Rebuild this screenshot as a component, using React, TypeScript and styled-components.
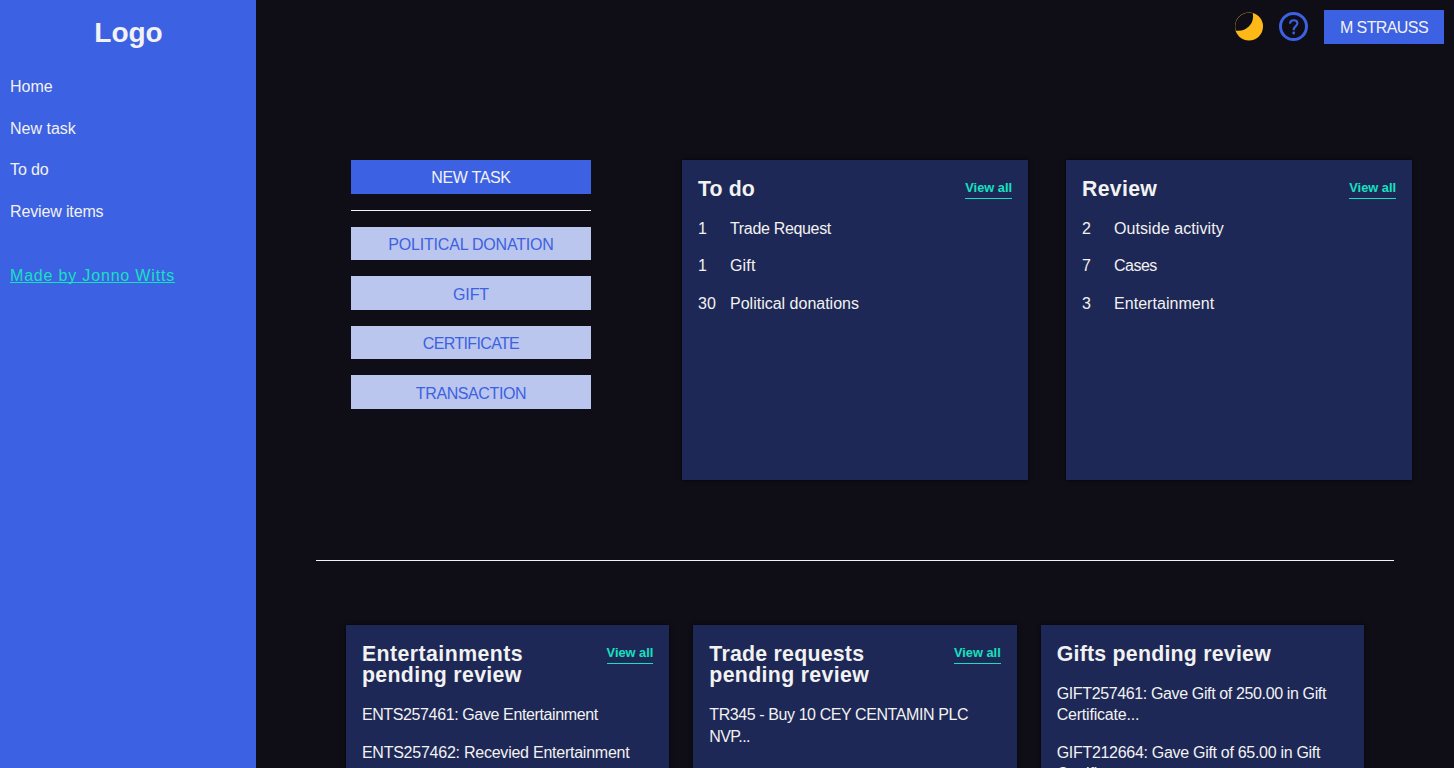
import React from 'react';
import styled, { createGlobalStyle, css } from 'styled-components';

const color = {
  page: '#0f0e17',
  primary: '#3c61e2',
  light: '#bac6ed',
  card: '#1e2856',
  text: '#f2f2f2',
  accent: '#17e0c0',
  moon: '#ffb917',
};

const GlobalStyle = createGlobalStyle`
  *, *::before, *::after { box-sizing: border-box; }
  html, body { margin: 0; padding: 0; background: ${color.page}; overflow: hidden; }
  body {
    font-family: "Liberation Sans", Arial, sans-serif;
    font-size: 16px;
    line-height: 21.6px;
    color: ${color.text};
  }
  h1, h2, p, ul { margin: 0; padding: 0; }
  ul { list-style: none; }
`;

const Shell = styled.div`
  display: grid;
  grid-template-columns: 256px 1fr;
  height: 100vh;
  overflow: hidden;
`;

const Sidebar = styled.aside`
  background: ${color.primary};
  padding: 16px 10px;
`;

const Logo = styled.h1`
  padding-left: 1px;
  font-size: 28px;
  line-height: 34px;
  text-align: center;
`;

const Nav = styled.nav`
  display: flex;
  flex-direction: column;
  align-items: flex-start;
  gap: 20px;
  margin: 26px 0 42.4px;
`;

const Tracked = styled.span<{ $track?: number }>`
  letter-spacing: ${({ $track = 0 }) => $track}px;
  white-space: nowrap;
`;

const NavLink = styled(Tracked).attrs({ as: 'a' })`
  color: ${color.text};
`;

const Credit = styled.a`
  color: ${color.accent};
  letter-spacing: 0.82px;
  text-decoration: underline;
  text-decoration-thickness: 1px;
  text-underline-offset: 1px;
  text-decoration-skip-ink: none;
`;

const Main = styled.main`
  display: flex;
  flex-direction: column;
  align-items: center;
  height: 100vh;
  overflow: hidden;
`;

const TopBar = styled.header`
  align-self: stretch;
  display: flex;
  justify-content: flex-end;
  align-items: center;
  gap: 16px;
  height: 53.6px;
  flex: none;
  padding: 10px;
`;

const Icon = styled.svg`
  display: block;
  width: 29px;
  height: 29px;
  flex: none;
`;

const Button = styled.button<{ $soft?: boolean; $track?: number }>`
  border: 0;
  height: 33.6px;
  padding: 9.35px 0 6.65px;
  font: 16px/17.6px "Liberation Sans", Arial, sans-serif;
  text-transform: uppercase;
  white-space: nowrap;
  letter-spacing: ${({ $track = 0 }) => $track}px;
  ${({ $soft }) =>
    $soft
      ? css`
          background: ${color.light};
          color: ${color.primary};
        `
      : css`
          background: ${color.primary};
          color: ${color.text};
        `}
`;

const UserButton = styled(Button)`
  width: 120px;
`;

const Overview = styled.section`
  display: grid;
  grid-template-columns: repeat(3, 384px);
  justify-items: center;
  margin-top: 106.4px;
  height: 320px;
  flex: none;
`;

const Actions = styled.div`
  display: flex;
  flex-direction: column;
  gap: 16px;
  width: 240px;
`;

const Rule = styled.div`
  height: 1px;
  flex: none;
  background: ${color.text};
`;

const SectionRule = styled(Rule)`
  width: 1078px;
  margin: 80px 0 64px;
`;

const Card = styled.article`
  background: ${color.card};
  box-shadow: 0 0 4px rgba(0, 0, 0, 0.75);
  padding: 16px;
`;

const SummaryCard = styled(Card)`
  width: 346px;
  height: 320px;
`;

const Pending = styled.section`
  display: grid;
  grid-template-columns: repeat(3, 323.4px);
  gap: 24px;
  flex: none;
`;

const PendingCard = styled(Card)`
  height: 320px;
`;

const CardHead = styled.div`
  display: flex;
  justify-content: space-between;
  align-items: flex-start;
  margin-bottom: 17.2px;
`;

const CardTitle = styled.h2`
  display: flex;
  flex-direction: column;
  padding-top: 3px;
  font-size: 21.3px;
  line-height: 21.4px;
`;

const ViewAll = styled.a`
  margin-top: 4px;
  height: 19px;
  padding-bottom: 2px;
  border-bottom: 1px solid ${color.accent};
  color: ${color.accent};
  font-size: 12.8px;
  font-weight: 700;
  line-height: 16px;
  white-space: nowrap;
`;

const List = styled.ul`
  display: flex;
  flex-direction: column;
  gap: 16px;
`;

const CountRow = styled.li`
  display: grid;
  grid-template-columns: 32px 1fr;
`;

const Entry = styled.li`
  display: flex;
  flex-direction: column;
  align-items: flex-start;
`;

type Line = [text: string, track: number];

const navItems: Line[] = [
  ['Home', 0],
  ['New task', 0],
  ['To do', -0.1],
  ['Review items', -0.14],
];

const taskKinds: Line[] = [
  ['Political donation', -0.2],
  ['Gift', -0.15],
  ['Certificate', -0.65],
  ['Transaction', -0.4],
];

const summaries: { title: Line; rows: [string, string, number][] }[] = [
  {
    title: ['To do', 0.1],
    rows: [
      ['1', 'Trade Request', -0.33],
      ['1', 'Gift', 0.15],
      ['30', 'Political donations', 0],
    ],
  },
  {
    title: ['Review', 0.3],
    rows: [
      ['2', 'Outside activity', 0.08],
      ['7', 'Cases', -0.5],
      ['3', 'Entertainment', 0.05],
    ],
  },
];

const pending: { title: Line[]; link: boolean; entries: Line[][] }[] = [
  {
    title: [['Entertainments', 0.44], ['pending review', 0.34]],
    link: true,
    entries: [
      [['ENTS257461: Gave Entertainment', -0.38]],
      [['ENTS257462: Recevied Entertainment', -0.24]],
    ],
  },
  {
    title: [['Trade requests', 0.25], ['pending review', 0.34]],
    link: true,
    entries: [[['TR345 - Buy 10 CEY CENTAMIN PLC', -0.41], ['NVP...', -0.6]]],
  },
  {
    title: [['Gifts pending review', 0.24]],
    link: false,
    entries: [
      [['GIFT257461: Gave Gift of 250.00 in Gift', -0.37], ['Certificate...', -0.2]],
      [['GIFT212664: Gave Gift of 65.00 in Gift', -0.3], ['Certificate...', -0.2]],
    ],
  },
];

const MoonIcon = () => (
  <Icon viewBox="0 0 29 29">
    <defs>
      <clipPath id="moon-disc">
        <circle cx="15" cy="14.5" r="13.8" />
      </clipPath>
    </defs>
    <circle cx="15" cy="14.5" r="14" fill={color.moon} />
    <circle cx="4.5" cy="4.2" r="14.6" fill={color.page} clipPath="url(#moon-disc)" />
  </Icon>
);

const HelpIcon = () => (
  <Icon viewBox="0 0 29 29" fill="none" stroke={color.primary}>
    <circle cx="14.5" cy="14.5" r="13" strokeWidth="3" />
    <path
      d="M11 11.6C11.1 9.5 12.6 8.3 14.8 8.3C17 8.3 18.4 9.5 18.4 11.3C18.4 12.8 17.6 13.5 16.5 14.4C15.2 15.5 14.7 16.2 14.7 18.2"
      strokeWidth="2.1"
    />
    <circle cx="14.7" cy="21" r="1.4" fill={color.primary} stroke="none" />
  </Icon>
);

const Head = ({ title, link }: { title: Line[]; link: boolean }) => (
  <CardHead>
    <CardTitle>
      {title.map(([text, track]) => (
        <Tracked key={text} $track={track}>{text}</Tracked>
      ))}
    </CardTitle>
    {link && <ViewAll>View all</ViewAll>}
  </CardHead>
);

export default function App() {
  return (
    <>
      <GlobalStyle />
      <Shell>
        <Sidebar>
          <Logo>Logo</Logo>
          <Nav>
            {navItems.map(([text, track]) => (
              <NavLink key={text} $track={track}>{text}</NavLink>
            ))}
          </Nav>
          <Credit>Made by Jonno Witts</Credit>
        </Sidebar>
        <Main>
          <TopBar>
            <MoonIcon />
            <HelpIcon />
            <UserButton $track={-0.6}>M Strauss</UserButton>
          </TopBar>
          <Overview>
            <Actions>
              <Button $track={-0.35}>New task</Button>
              <Rule />
              {taskKinds.map(([text, track]) => (
                <Button key={text} $soft $track={track}>{text}</Button>
              ))}
            </Actions>
            {summaries.map(({ title, rows }) => (
              <SummaryCard key={title[0]}>
                <Head title={[title]} link />
                <List>
                  {rows.map(([count, label, track]) => (
                    <CountRow key={label}>
                      <span>{count}</span>
                      <Tracked $track={track}>{label}</Tracked>
                    </CountRow>
                  ))}
                </List>
              </SummaryCard>
            ))}
          </Overview>
          <SectionRule />
          <Pending>
            {pending.map(({ title, link, entries }) => (
              <PendingCard key={title[0][0]}>
                <Head title={title} link={link} />
                <List>
                  {entries.map((lines) => (
                    <Entry key={lines[0][0]}>
                      {lines.map(([text, track]) => (
                        <Tracked key={text} $track={track}>{text}</Tracked>
                      ))}
                    </Entry>
                  ))}
                </List>
              </PendingCard>
            ))}
          </Pending>
        </Main>
      </Shell>
    </>
  );
}
